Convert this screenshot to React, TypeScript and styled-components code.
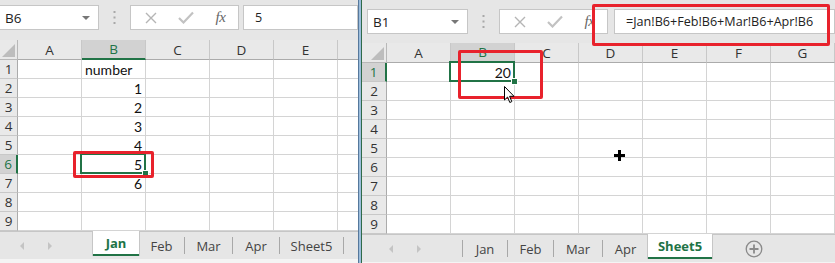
import React from "react";
import styled, { createGlobalStyle, css } from "styled-components";

const GREEN = "#217346";
const LINE = "#d4d4d4";
const RED = "#e8222c";

const Global = createGlobalStyle`
  html, body { margin: 0; padding: 0; background: #e6e6e6; }
  body { font-family: "Lato", "Open Sans", sans-serif; }
`;

type Tab = { name: string; w: number };

type Pane = {
  width: number;
  barH: number;
  boxTop: number;
  nameLeft: number;
  nameW: number;
  inputGap: number;
  name: string;
  formula: string;
  rowHeadW: number;
  cols: string[];
  selCol: number;
  selRow: number;
  cells: Record<string, { v: string; left?: boolean }>;
  arrowsW: number;
  tabs: Tab[];
  active: number;
  plus: boolean;
  footH: number;
};

const Cross = () => (
  <svg width="12" height="12" viewBox="0 0 12 12">
    <path d="M1 1L11 11M11 1L1 11" stroke="#b5b5b5" strokeWidth="1.4" />
  </svg>
);

const Check = () => (
  <svg width="16" height="13" viewBox="0 0 16 13">
    <path d="M1 7L5.5 11.5L15 1.5" stroke="#c2c2c2" strokeWidth="2.2" fill="none" />
  </svg>
);

const Dots = () => (
  <svg width="3" height="13" viewBox="0 0 3 13">
    <rect x="0.5" y="0" width="2" height="2" fill="#a8a8a8" />
    <rect x="0.5" y="5.5" width="2" height="2" fill="#a8a8a8" />
    <rect x="0.5" y="11" width="2" height="2" fill="#a8a8a8" />
  </svg>
);

const PlusCircle = () => (
  <svg width="18" height="18" viewBox="0 0 18 18">
    <circle cx="9" cy="9" r="7.8" stroke="#8a8a8a" strokeWidth="1.3" fill="none" />
    <path d="M9 4.5V13.5M4.5 9H13.5" stroke="#8a8a8a" strokeWidth="1.8" />
  </svg>
);

const Pointer = () => (
  <svg width="12" height="18" viewBox="0 0 12 18">
    <path
      d="M0.5 0.5L0.5 14L3.6 11L5.8 16.5L7.8 15.6L5.6 10.3L10 10.3Z"
      fill="#fff"
      stroke="#000"
      strokeWidth="1"
      strokeLinejoin="round"
    />
  </svg>
);

const CrossCursor = () => (
  <svg width="11" height="11" viewBox="0 0 11 11">
    <path d="M5.5 0V11M0 5.5H11" stroke="#000" strokeWidth="3" />
  </svg>
);

const Window = ({ p, children }: { p: Pane; children?: React.ReactNode }) => {
  const rows = Array.from({ length: 9 }, (_, i) => i + 1);
  return (
    <Frame $w={p.width}>
      <FormulaBar $h={p.barH} $top={p.boxTop}>
        <NameBox $left={p.nameLeft} $w={p.nameW}>
          {p.name}
          <Caret />
        </NameBox>
        <DotSlot>
          <Dots />
        </DotSlot>
        <FxBox>
          <FxSlot>
            <Cross />
          </FxSlot>
          <FxSlot>
            <Check />
          </FxSlot>
          <FxSlot>
            <Fx>fx</Fx>
          </FxSlot>
        </FxBox>
        <Input $gap={p.inputGap}>{p.formula}</Input>
      </FormulaBar>

      <Sheet $rowHead={p.rowHeadW} $cols={p.cols.length}>
        <Corner>
          <CornerMark />
        </Corner>
        {p.cols.map((c, i) => (
          <ColHead key={c} $sel={i === p.selCol}>
            {c}
          </ColHead>
        ))}
        {rows.map((r) => (
          <React.Fragment key={r}>
            <RowHead $sel={r === p.selRow}>{r}</RowHead>
            {p.cols.map((c, i) => {
              const cell = p.cells[`${c}${r}`];
              const sel = i === p.selCol && r === p.selRow;
              return (
                <Cell key={c} $left={cell?.left} $sel={sel}>
                  {cell?.v}
                </Cell>
              );
            })}
          </React.Fragment>
        ))}
      </Sheet>

      <TabBar>
        <Arrows $w={p.arrowsW}>
          <ArrowLeft />
          <ArrowRight />
        </Arrows>
        {p.active !== 0 && <Sep />}
        {p.tabs.map((t, i) => (
          <React.Fragment key={t.name}>
            <SheetTab $w={t.w} $active={i === p.active}>
              {t.name}
            </SheetTab>
            {i !== p.active && i + 1 !== p.active && <Sep />}
          </React.Fragment>
        ))}
        {p.plus && (
          <PlusSlot>
            <PlusCircle />
          </PlusSlot>
        )}
      </TabBar>
      <Foot $h={p.footH} />
      {children}
    </Frame>
  );
};

const left: Pane = {
  width: 358,
  barH: 40,
  boxTop: 5,
  nameLeft: -1,
  nameW: 100,
  inputGap: 4,
  name: "B6",
  formula: "5",
  rowHeadW: 18,
  cols: ["A", "B", "C", "D", "E", "F"],
  selCol: 1,
  selRow: 6,
  cells: {
    B1: { v: "number", left: true },
    B2: { v: "1" },
    B3: { v: "2" },
    B4: { v: "3" },
    B5: { v: "4" },
    B6: { v: "5" },
    B7: { v: "6" },
  },
  arrowsW: 93,
  tabs: [
    { name: "Jan", w: 46 },
    { name: "Feb", w: 45 },
    { name: "Mar", w: 47 },
    { name: "Apr", w: 46 },
    { name: "Sheet5", w: 63 },
  ],
  active: 0,
  plus: false,
  footH: 4,
};

const right: Pane = {
  width: 473,
  barH: 43,
  boxTop: 9,
  nameLeft: 5,
  nameW: 101,
  inputGap: 6,
  name: "B1",
  formula: "=Jan!B6+Feb!B6+Mar!B6+Apr!B6",
  rowHeadW: 25,
  cols: ["A", "B", "C", "D", "E", "F", "G"],
  selCol: 1,
  selRow: 1,
  cells: { B1: { v: "20" } },
  arrowsW: 100,
  tabs: [
    { name: "Jan", w: 44 },
    { name: "Feb", w: 45 },
    { name: "Mar", w: 48 },
    { name: "Apr", w: 45 },
    { name: "Sheet5", w: 64 },
  ],
  active: 4,
  plus: true,
  footH: 1,
};

export default function App() {
  return (
    <>
      <Global />
      <Root>
        <Window p={left}>
          <RedBox $x={73} $y={151} $w={81} $h={27} />
        </Window>
        <Divider />
        <Window p={right}>
          <RedBox $x={230} $y={4} $w={238} $h={42} />
          <RedBox $x={96} $y={50} $w={85} $h={49} />
          <Overlay $x={142} $y={86}>
            <Pointer />
          </Overlay>
          <Overlay $x={252} $y={150}>
            <CrossCursor />
          </Overlay>
        </Window>
      </Root>
    </>
  );
}

const Root = styled.div`
  display: flex;
  width: 835px;
  height: 263px;
  overflow: hidden;
`;

const Frame = styled.div<{ $w: number }>`
  position: relative;
  width: ${(p) => p.$w}px;
  flex: none;
  height: 263px;
  display: flex;
  flex-direction: column;
  background: #e6e6e6;
  overflow: hidden;
`;

const Divider = styled.div`
  width: 4px;
  flex: none;
  background: linear-gradient(to right, #56789c 0 1px, #9cbddc 1px 3px, #2f6b4a 3px 4px);
`;

const FormulaBar = styled.div<{ $h: number; $top: number }>`
  height: ${(p) => p.$h}px;
  box-sizing: border-box;
  padding-top: ${(p) => p.$top}px;
  display: flex;
  align-items: flex-start;
  flex: none;
`;

const boxBase = css`
  height: 25px;
  box-sizing: border-box;
  background: #fff;
  border: 1px solid #c6c6c6;
`;

const NameBox = styled.div<{ $left: number; $w: number }>`
  ${boxBase};
  position: relative;
  margin-left: ${(p) => p.$left}px;
  width: ${(p) => p.$w}px;
  flex: none;
  padding-left: 5px;
  display: flex;
  align-items: center;
  font-family: "Open Sans", sans-serif;
  font-size: 13.5px;
  color: #222;
`;

const Caret = styled.span`
  position: absolute;
  right: 8px;
  top: 10px;
  border-left: 4px solid transparent;
  border-right: 4px solid transparent;
  border-top: 4px solid #777;
`;

const DotSlot = styled.div`
  width: 31px;
  height: 25px;
  flex: none;
  display: flex;
  align-items: center;
  justify-content: center;
`;

const FxBox = styled.div`
  ${boxBase};
  width: 109px;
  flex: none;
  display: flex;
  align-items: center;
  padding-left: 2px;
`;

const FxSlot = styled.div`
  width: 35px;
  height: 100%;
  display: flex;
  align-items: center;
  justify-content: center;
`;

const Fx = styled.span`
  font-family: "Liberation Serif", serif;
  font-style: italic;
  font-size: 15px;
  color: #666;
  letter-spacing: -0.5px;
`;

const Input = styled.div<{ $gap: number }>`
  ${boxBase};
  margin-left: ${(p) => p.$gap}px;
  flex: 1;
  min-width: 0;
  padding-left: 11px;
  display: flex;
  align-items: center;
  white-space: nowrap;
  overflow: hidden;
  font-family: "Open Sans", sans-serif;
  font-size: 12.6px;
  color: #222;
`;

const Sheet = styled.div<{ $rowHead: number; $cols: number }>`
  display: grid;
  grid-template-columns: ${(p) => p.$rowHead}px repeat(${(p) => p.$cols}, 64px);
  grid-template-rows: 20px repeat(9, 19px);
  flex: none;
  background: #fff;
  font-family: "Lato", sans-serif;
  font-size: 14px;
  color: #111;
`;

const headBase = css`
  box-sizing: border-box;
  background: #e9e9e9;
  display: flex;
  align-items: center;
  justify-content: center;
  font-family: "Open Sans", sans-serif;
  font-size: 13.5px;
  color: #333;
`;

const Corner = styled.div`
  ${headBase};
  position: relative;
  border-right: 1px solid #b8b8b8;
  border-bottom: 1px solid #b8b8b8;
`;

const CornerMark = styled.span`
  position: absolute;
  right: 2px;
  bottom: 2px;
  border-left: 13px solid transparent;
  border-bottom: 13px solid #bdbdbd;
`;

const ColHead = styled.div<{ $sel: boolean }>`
  ${headBase};
  border-right: 1px solid #c8c8c8;
  border-bottom: 1px solid #ababab;
  ${(p) =>
    p.$sel &&
    css`
      background: #d2d2d2;
      color: ${GREEN};
      border-bottom: 2px solid ${GREEN};
    `}
`;

const RowHead = styled.div<{ $sel: boolean }>`
  ${headBase};
  border-right: 1px solid #ababab;
  border-bottom: 1px solid #c8c8c8;
  ${(p) =>
    p.$sel &&
    css`
      background: #d2d2d2;
      color: ${GREEN};
      border-right: 2px solid ${GREEN};
    `}
`;

const Cell = styled.div<{ $left?: boolean; $sel: boolean }>`
  position: relative;
  box-sizing: border-box;
  border-right: 1px solid ${LINE};
  border-bottom: 1px solid ${LINE};
  display: flex;
  align-items: center;
  justify-content: ${(p) => (p.$left ? "flex-start" : "flex-end")};
  padding: 0 3px;
  white-space: nowrap;
  ${(p) =>
    p.$sel &&
    css`
      &::after {
        content: "";
        position: absolute;
        left: -2px;
        top: -2px;
        right: -1px;
        bottom: -1px;
        border: 2px solid ${GREEN};
      }
      &::before {
        content: "";
        position: absolute;
        right: -4px;
        bottom: -4px;
        width: 5px;
        height: 5px;
        background: ${GREEN};
        border: 1px solid #fff;
        z-index: 1;
      }
    `}
`;

const TabBar = styled.div`
  height: 28px;
  flex: none;
  display: flex;
  align-items: center;
  box-sizing: border-box;
  border-top: 1px solid #c6c6c6;
  background: #e6e6e6;
`;

const Arrows = styled.div<{ $w: number }>`
  width: ${(p) => p.$w}px;
  flex: none;
  display: flex;
  align-items: center;
  padding-left: ${(p) => (p.$w > 95 ? 27 : 20)}px;
  gap: 24px;
  box-sizing: border-box;
`;

const ArrowLeft = styled.span`
  border-top: 4px solid transparent;
  border-bottom: 4px solid transparent;
  border-right: 4px solid #c4c4c4;
`;

const ArrowRight = styled.span`
  border-top: 4px solid transparent;
  border-bottom: 4px solid transparent;
  border-left: 4px solid #c4c4c4;
`;

const Sep = styled.span`
  width: 1px;
  height: 17px;
  background: #a8a8a8;
  flex: none;
`;

const SheetTab = styled.div<{ $w: number; $active: boolean }>`
  width: ${(p) => p.$w}px;
  flex: none;
  align-self: stretch;
  display: flex;
  align-items: center;
  justify-content: center;
  font-family: "Open Sans", sans-serif;
  font-size: 13px;
  color: #444;
  box-sizing: border-box;
  ${(p) =>
    p.$active &&
    css`
      margin-top: -1px;
      margin-bottom: 3px;
      background: #fff;
      color: ${GREEN};
      font-weight: 700;
      border-bottom: 2px solid ${GREEN};
      box-shadow: 1px 0 0 #c6c6c6, -1px 0 0 #c6c6c6;
    `}
`;

const PlusSlot = styled.div`
  margin-left: 33px;
  display: flex;
  align-items: center;
`;

const Foot = styled.div<{ $h: number }>`
  height: ${(p) => p.$h}px;
  flex: none;
  background: #f4f4f4;
`;

const RedBox = styled.div<{ $x: number; $y: number; $w: number; $h: number }>`
  position: absolute;
  left: ${(p) => p.$x}px;
  top: ${(p) => p.$y}px;
  width: ${(p) => p.$w}px;
  height: ${(p) => p.$h}px;
  box-sizing: border-box;
  border: 3px solid ${RED};
  border-radius: 2px;
  z-index: 5;
`;

const Overlay = styled.div<{ $x: number; $y: number }>`
  position: absolute;
  left: ${(p) => p.$x}px;
  top: ${(p) => p.$y}px;
  display: flex;
  z-index: 6;
`;
